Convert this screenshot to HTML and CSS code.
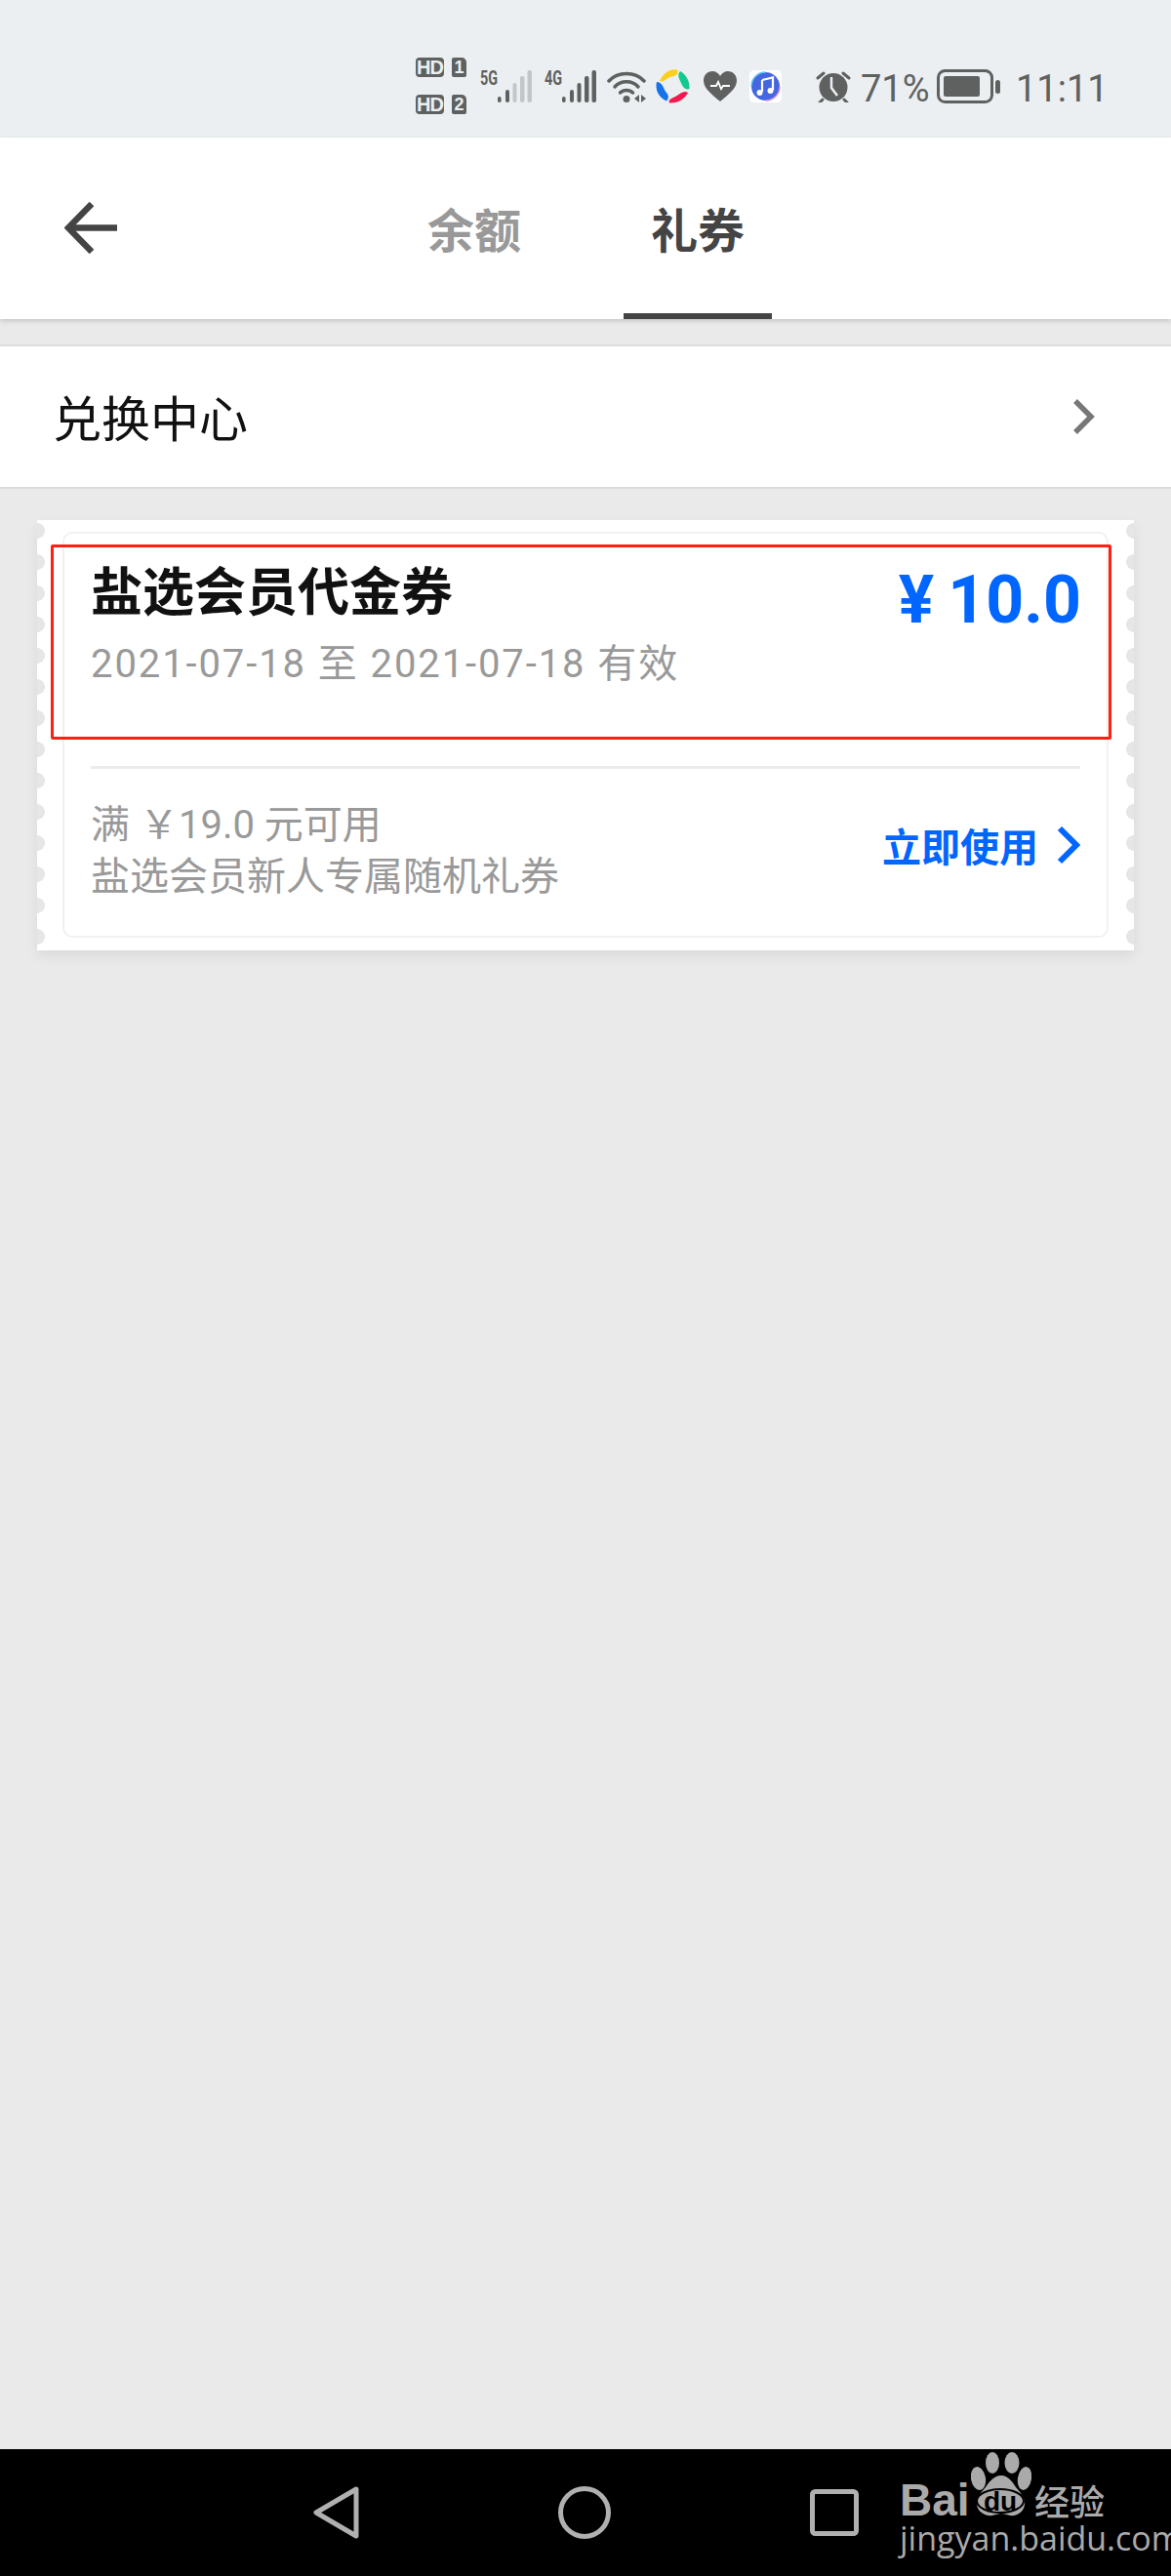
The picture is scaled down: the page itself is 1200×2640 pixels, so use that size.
FILE: index.html
```html
<!DOCTYPE html>
<html lang="zh-CN">
<head>
<meta charset="utf-8">
<title>礼券</title>
<link rel="stylesheet" href="styles.css">
</head>
<body>
<div class="page">
  <header class="status">
    <div class="sims">
      <div class="sim"><span class="hd">HD</span><span class="num">1</span></div>
      <div class="sim"><span class="hd">HD</span><span class="num">2</span></div>
    </div>
    <div class="signal s5">
      <span class="net">5G</span>
      <svg class="bars" width="35" height="33" viewBox="0 0 35 33"><g fill="#5f6160"><rect x="0" y="27" width="3.6" height="6" rx="1.8"/><rect x="8" y="20" width="4" height="13" rx="2"/></g><g fill="#c3c6c7"><rect x="15.500" y="13" width="4" height="20" rx="2"/><rect x="23" y="6" width="4.500" height="27" rx="2"/><rect x="30.500" y="0" width="4.500" height="33" rx="2"/></g></svg>
    </div>
    <div class="signal s4">
      <span class="net">4G</span>
      <svg class="bars" width="35" height="33" viewBox="0 0 35 33"><g fill="#5f6160"><rect x="0" y="27" width="3.6" height="6" rx="1.8"/><rect x="8" y="20" width="4" height="13" rx="2"/><rect x="15.500" y="13" width="4" height="20" rx="2"/><rect x="23" y="6" width="4.500" height="27" rx="2"/><rect x="30.500" y="0" width="4.500" height="33" rx="2"/></g></svg>
    </div>
    <svg class="wifi" width="40" height="33" viewBox="0 0 40 33"><g fill="none" stroke="#5f6160" stroke-width="3.500" stroke-linecap="round"><path d="M2 11C11 1 29 1 38 11"/><path d="M8 17C14 10 26 10 32 17"/></g><path d="M13.500 23C17 19.500 23 19.500 26.500 23" fill="none" stroke="#5f6160" stroke-width="3.500" stroke-linecap="round"/><circle cx="20" cy="29.500" r="3.500" fill="#5f6160"/><path d="M33 25v8l-5-4zM35 25v8l5-4z" fill="#5f6160"/></svg>
    <svg class="store" width="35" height="36" viewBox="0 0 35 36"><path d="M4 13C7 5 15 0 22 1.500 24 5 21 8 16 8.500 11 9.500 9 15 4 13z" fill="#fbd01d"/><path d="M25 3C31 6 35 13 34.500 21 30 23 27 18 25.500 14 23.500 10 22 6 25 3z" fill="#12c98f"/><path d="M33 25C30 31 23 36 14 35.500 12 32 17 30.500 21 28.500 25 26 29 22 33 25z" fill="#f5184f"/><path d="M1 14C-1 22 3 30 11 33.500 14 30 13 27 10.500 24.500 8 21 7 14 1 14z" fill="#1673ea"/></svg>
    <svg class="heart" width="34" height="31" viewBox="0 0 34 31"><path d="M17 31C9 24 0 18 0 9.500 0 4 4 0 9 0c3.500 0 6.500 2 8 5 1.500-3 4.500-5 8-5 5 0 9 4 9 9.500C34 18 25 24 17 31z" fill="#5f6160"/><path d="M7 15h6l2-4 3 7 2-3h7" fill="none" stroke="#fff" stroke-width="1.800"/></svg>
    <svg class="music" width="33" height="33" viewBox="0 0 33 33"><rect width="33" height="33" rx="5" fill="#fff"/><circle cx="16.500" cy="16.500" r="14.500" fill="#4466e0"/><path d="M2 16.500A14.500 14.500 0 0 1 16.500 2" fill="none" stroke="#5cc8f2" stroke-width="1.500"/><path d="M16.500 31A14.500 14.500 0 0 0 31 16.500" fill="none" stroke="#c98af0" stroke-width="1.500"/><path d="M13 10l11-2.500v13" fill="none" stroke="#fff" stroke-width="2.200"/><path d="M13 10v12" stroke="#fff" stroke-width="2.200"/><circle cx="10.500" cy="23" r="3" fill="#fff"/><circle cx="21.500" cy="21" r="3" fill="#fff"/></svg>
    <svg class="alarm" width="36" height="33" viewBox="0 0 36 33"><circle cx="18" cy="17.500" r="14.500" fill="#5f6160"/><path d="M2 8l6-5M34 8l-6-5M7 30l-3 3M29 30l3 3" stroke="#5f6160" stroke-width="3" stroke-linecap="round"/><path d="M16 7v11l6 8" fill="none" stroke="#ebeff2" stroke-width="2.500"/></svg>
    <span class="pct">71%</span>
    <svg class="battery" width="65" height="35" viewBox="0 0 65 35"><rect x="1.500" y="1.500" width="55" height="32" rx="7" fill="none" stroke="#5f6160" stroke-width="3"/><rect x="7" y="7" width="37" height="21" rx="2" fill="#5f6160"/><rect x="60" y="11" width="5" height="14" rx="2.500" fill="#5f6160"/></svg>
    <span class="time">11:11</span>
  </header>

  <nav class="topbar">
    <svg class="back" width="54" height="53" viewBox="0 0 54 53"><path d="M28 2L4 26.500 28 51M4 26.500h50" fill="none" stroke="#444" stroke-width="6.500"/></svg>
    <div class="tabs">
      <div class="tab">余额</div>
      <div class="tab active">礼券</div>
    </div>
  </nav>

  <main class="content">
    <a class="exchange">
      <span>兑换中心</span>
      <svg width="24" height="38" viewBox="0 0 24 38"><path d="M3 3l16 16L3 35" fill="none" stroke="#777" stroke-width="5.500"/></svg>
    </a>

    <section class="coupon">
      <div class="ticket">
        <div class="ticket-top">
          <div>
            <h2 class="title">盐选会员代金券</h2>
            <p class="date">2021-07-18 至 2021-07-18 有效</p>
          </div>
          <div class="amount"><span class="yen">¥</span><span class="value">10.0</span></div>
        </div>
        <div class="ticket-bottom">
          <div class="terms">
            <div>满 ￥19.0 元可用</div>
            <div>盐选会员新人专属随机礼券</div>
          </div>
          <div class="use">
            <span>立即使用</span>
            <svg width="26" height="42" viewBox="0 0 26 42"><path d="M4 4l17 17L4 38" fill="none" stroke="#0066ff" stroke-width="6"/></svg>
          </div>
        </div>
      </div>
      <div class="mark"></div>
    </section>
  </main>

  <footer class="sysnav">
    <svg width="47" height="54" viewBox="0 0 47 54"><path d="M44 3L3 27l41 24z" fill="none" stroke="#b0b0b0" stroke-width="5" stroke-linejoin="round"/></svg>
    <svg width="54" height="54" viewBox="0 0 54 54"><circle cx="27" cy="27" r="24.500" fill="none" stroke="#b0b0b0" stroke-width="5"/></svg>
    <svg width="50" height="48" viewBox="0 0 50 48"><rect x="2.500" y="2.500" width="45" height="43" rx="3" fill="none" stroke="#b0b0b0" stroke-width="5"/></svg>
    <div class="watermark">
      <div class="brand">
        <span class="bai">Bai</span>
        <svg class="paw" width="62" height="66" viewBox="0 0 62 66"><g fill="#aaa"><ellipse cx="7.500" cy="27" rx="7.500" ry="12" transform="rotate(-10 7.500 27)"/><ellipse cx="22" cy="11" rx="7" ry="11"/><ellipse cx="42" cy="11" rx="7.500" ry="11"/><ellipse cx="55" cy="27" rx="7" ry="12" transform="rotate(10 55 27)"/><path d="M31 24c7 0 11 6 15 12 4 5 10 10 9 18-1 8-9 12-15 11-4-1-6-2-9-2s-5 1-9 2c-6 1-15-3-16-11-1-8 5-13 9-18 4-6 9-12 16-12z"/></g><ellipse cx="30" cy="50" rx="24" ry="12" fill="#aaa" stroke="#000" stroke-width="2"/><text x="30" y="60" class="du">du</text></svg>
        <span class="jy">经验</span>
      </div>
      <div class="url">jingyan.baidu.com</div>
    </div>
  </footer>
</div>
</body>
</html>
```
FILE: styles.css
```css
* { box-sizing: border-box; }
html, body { margin: 0; padding: 0; }
body { font-family: "Noto Sans CJK SC", "Noto Sans", sans-serif; background: #eaeaea; }
h2, p { margin: 0; }
.page { width: 1200px; height: 2640px; display: flex; flex-direction: column; }

.status { height: 141px; flex: none; background: #ebeff2; display: flex; align-items: flex-start; color: #5f6160; padding: 71px 0 0 426px; position: relative; }
.sims { display: flex; flex-direction: column; gap: 18px; margin-top: -12px; width: 66px; }
.sim { display: flex; gap: 8px; height: 20px; }
.hd { width: 29px; height: 20px; background: #5f6160; color: #ebeff2; border-radius: 4px; font: 700 20px/21px "Liberation Sans", sans-serif; text-align: center; letter-spacing: -1px; }
.num { width: 15px; height: 20px; background: #5f6160; color: #ebeff2; border-radius: 2px 5px 2px 2px; font: 700 18px/21px "Liberation Sans", sans-serif; text-align: center; }
.signal { display: flex; align-items: flex-start; height: 34px; margin-top: 1px; }
.s4 { margin-left: 13px; }
.net { font: 700 20px/17px "Roboto", sans-serif; width: 18px; transform: scaleX(.72); transform-origin: left; white-space: nowrap; }
.wifi { margin: 1px 0 0 11px; }
.store { margin: -1px 0 0 10px; }
.heart { margin: 2px 0 0 14px; }
.music { margin: 1px 0 0 13px; }
.alarm { margin: 1px 0 0 35px; }
.pct { font: 400 38px/38px "Roboto", sans-serif; margin-left: 10px; width: 72px; margin-top: 1px; }
.battery { margin-left: 6px; }
.time { font: 400 38px/38px "Roboto", sans-serif; margin-left: 16px; margin-top: 1px; }

.topbar { height: 186px; flex: none; background: #fff; display: flex; position: relative; box-shadow: 0 2px 5px rgba(0,0,0,.16); z-index: 1; padding-left: 410px; }
.back { position: absolute; left: 66px; top: 66px; }
.tabs { display: flex; gap: 77px; }
.tab { width: 152px; height: 186px; padding-top: 57px; font-size: 48px; line-height: 70px; font-weight: 700; color: #999; text-align: center; }
.tab.active { color: #444; border-bottom: 6px solid #444; }

.content { flex: 1; padding-top: 26px; background: #eaeaea; }
.exchange { height: 148px; background: #fff; border-top: 2px solid #dedede; border-bottom: 2px solid #dcdcdc; display: flex; align-items: center; justify-content: space-between; padding: 0 77px 0 54px; font-size: 50px; color: #111; }
.exchange span { margin-top: -3px; }

.coupon { margin: 32px 38px 0; height: 441px; background: #fff; padding: 12px 26px 13px; position: relative; box-shadow: 0 6px 12px rgba(0,0,0,.07); }
.coupon::before, .coupon::after { content: ""; position: absolute; top: 0; bottom: 0; width: 9px; background-size: 9px 32px; background-position: 0 -5px; }
.coupon::before { left: 0; background-image: radial-gradient(circle 8px at 0 16px, #e6e6e6 97%, transparent 100%); }
.coupon::after { right: 0; background-image: radial-gradient(circle 8px at 9px 16px, #e6e6e6 97%, transparent 100%); }
.ticket { height: 416px; border: 2px solid #f1f1f1; border-radius: 10px; padding: 0 27px; display: flex; flex-direction: column; }
.ticket-top { height: 241px; flex: none; padding-top: 26px; border-bottom: 3px solid #ebebeb; display: flex; justify-content: space-between; align-items: flex-start; }
.title { font-size: 53px; line-height: 60px; font-weight: 700; color: #111; white-space: nowrap; }
.date { margin-top: 23px; font: 400 40px/50px "Roboto", "Noto Sans CJK SC", sans-serif; letter-spacing: 1.9px; color: #999; white-space: nowrap; }
.amount { font: 700 68px/76px "Roboto", sans-serif; color: #0066ff; display: flex; align-items: center; gap: 14px; margin-top: 4px; margin-right: -1px; }
.ticket-bottom { flex: 1; display: flex; align-items: center; justify-content: space-between; padding-bottom: 3px; }
.terms { font: 400 40px/53px "Roboto", "Noto Sans CJK SC", sans-serif; color: #999; white-space: nowrap; }
.use { display: flex; align-items: center; gap: 18px; font-size: 40px; line-height: 50px; font-weight: 700; color: #0066ff; margin-bottom: 12px; }
.use svg { margin-right: -1px; }

.mark { position: absolute; left: 14px; top: 25px; width: 1087px; height: 200px; border: 3px solid #ff2014; border-radius: 2px; z-index: 2; }

.sysnav { height: 130px; flex: none; background: #000; display: flex; align-items: flex-start; padding: 38px 0 0 321px; position: relative; gap: 204px; }
.sysnav svg:nth-child(3) { margin-top: 3px; }
.watermark { position: absolute; left: 922px; top: 3px; width: 224px; color: #aaa; }
.brand { display: flex; align-items: flex-end; height: 66px; width: 214px; }
.bai { font: 700 46px/33px "Liberation Sans", sans-serif; width: 73px; height: 33px; }
.paw { flex: none; }
.du { font: 700 28px "Liberation Sans", sans-serif; fill: #000; text-anchor: middle; }
.jy { font: 500 36px/33px "Noto Sans CJK SC", sans-serif; margin-left: 3px; height: 33px; white-space: nowrap; }
.url { font: 400 34px/28px "Open Sans", sans-serif; margin-top: 8px; white-space: nowrap; }
```
